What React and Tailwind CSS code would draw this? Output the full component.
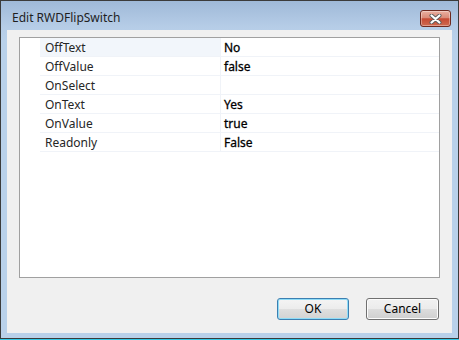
const rows = [
  { name: "OffText", value: "No" },
  { name: "OffValue", value: "false" },
  { name: "OnSelect", value: "" },
  { name: "OnText", value: "Yes" },
  { name: "OnValue", value: "true" },
  { name: "Readonly", value: "False" },
];

const CloseButton = () => (
  <div className="mt-[9px] flex h-[17px] w-[31px] items-center justify-center rounded-[3px] border border-[#6e2a20] bg-[linear-gradient(to_bottom,#eab0a1_0%,#da8b78_45%,#c64a33_52%,#cf6a50_100%)] shadow-[inset_0_0_0_1px_rgba(255,255,255,0.35)]">
    <svg width="13" height="10" viewBox="0 0 13 10">
      <path d="M2.5 1.5 L10.5 8.5 M10.5 1.5 L2.5 8.5" stroke="#5a5a5a" strokeWidth="4" strokeLinecap="round" />
      <path d="M2.5 1.5 L10.5 8.5 M10.5 1.5 L2.5 8.5" stroke="#ffffff" strokeWidth="2.2" strokeLinecap="round" />
    </svg>
  </div>
);

const PropertyRow = ({ row, first }) => (
  <div className="flex h-[19px] shrink-0">
    <div className="w-[20px] shrink-0" />
    <div
      className={`flex w-[180px] shrink-0 items-center border-b border-[#f0f3f8] pl-[5px] pt-[1px] text-[#262626] ${
        first ? "bg-[#f2f6fb]" : ""
      }`}
    >
      {row.name}
    </div>
    <div className="flex flex-1 items-center border-b border-l border-[#f0f3f8] pl-[3px] pt-[1px] text-black [-webkit-text-stroke:0.3px_#000]">
      {row.value}
    </div>
  </div>
);

export default function App() {
  return (
    <div className="flex h-[340px] w-[459px] flex-col bg-[#33c9e6] font-['Noto_Sans',sans-serif] text-[12px]">
      <div className="flex h-[339px] w-[459px] flex-col border border-[#3b3b3b] bg-[linear-gradient(to_bottom,#9fb9d8_0px,#b6cde7_26px,#b9d1ea_40px,#b9d1ea_100%)] px-[6px] pb-[5px]">
        <div className="-mx-[6px] flex h-[29px] shrink-0 items-start justify-between pl-[11px] pr-[7px]">
          <span className="mt-[9px] leading-[16px] text-[#1e1e1e]">Edit RWDFlipSwitch</span>
          <CloseButton />
        </div>
        <div className="flex flex-1 flex-col bg-[#f0f0f0] px-[12px] pt-[7px]">
          <div className="flex h-[241px] flex-col border border-[#a0a0a0] bg-white">
            {rows.map((row, i) => (
              <PropertyRow key={row.name} row={row} first={i === 0} />
            ))}
          </div>
          <div className="mt-[20px] flex justify-end gap-[17px] pr-[1px]">
            <button className="h-[22px] w-[72px] rounded-[3px] border border-[#3c7fb1] bg-[linear-gradient(to_bottom,#f4f4f4_0%,#ececec_50%,#dfdfdf_50%,#d3d3d3_100%)] text-black shadow-[inset_0_0_0_1px_#8fdcf7]">
              OK
            </button>
            <button className="h-[22px] w-[73px] rounded-[3px] border border-[#707070] bg-[linear-gradient(to_bottom,#f2f2f2_0%,#ebebeb_50%,#dddddd_50%,#cfcfcf_100%)] text-black shadow-[inset_0_0_0_1px_#fcfcfc]">
              Cancel
            </button>
          </div>
        </div>
      </div>
    </div>
  );
}
